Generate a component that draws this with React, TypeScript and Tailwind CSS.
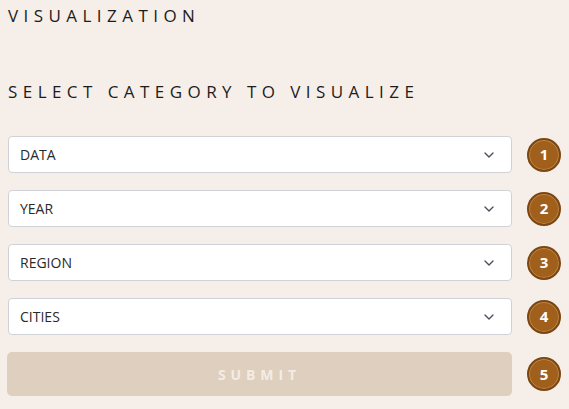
import { ChevronDown } from 'lucide-react'

const fields = ['DATA', 'YEAR', 'REGION', 'CITIES']

function Step({ n }: { n: number }) {
  return (
    <div className="flex h-[34px] w-[34px] shrink-0 items-center justify-center rounded-full border-2 border-[#7a4613] bg-[#a0601b] shadow-[inset_0_0_0_1px_rgba(230,180,120,0.45)]">
      <span className="text-[15px] font-bold leading-none text-white">{n}</span>
    </div>
  )
}

export default function App() {
  return (
    <div className="min-h-[409px] w-full bg-[#f6efe9] px-2 pt-[4px] font-['Open_Sans',sans-serif] text-[#1c1c1c]">
      <h1 className="text-[17px] leading-[24px] tracking-[0.32em]">VISUALIZATION</h1>

      <h2 className="mt-[52px] text-[17px] leading-[24px] tracking-[0.32em]">SELECT CATEGORY TO VISUALIZE</h2>

      <div className="mt-[32px] flex flex-col gap-[17px]">
        {fields.map((f, i) => (
          <div key={f} className="flex items-center gap-[15px]">
            <div className="flex h-[37px] w-[506px] items-center justify-between rounded-[4px] border border-[#cfd3d8] bg-white pl-[11px] pr-[14px]">
              <span className="text-[14px] text-[#2a2a2a]">{f}</span>
              <ChevronDown size={16} strokeWidth={2} className="text-[#4a4f57]" />
            </div>
            <Step n={i + 1} />
          </div>
        ))}

        <div className="flex items-center gap-[15px]">
          <button className="flex h-[44px] w-[506px] -ml-px items-center justify-center rounded-[5px] bg-[#dfcfbf] text-[14px] font-bold tracking-[0.35em] text-[#f4ece4]">
            SUBMIT
          </button>
          <Step n={5} />
        </div>
      </div>
    </div>
  )
}
